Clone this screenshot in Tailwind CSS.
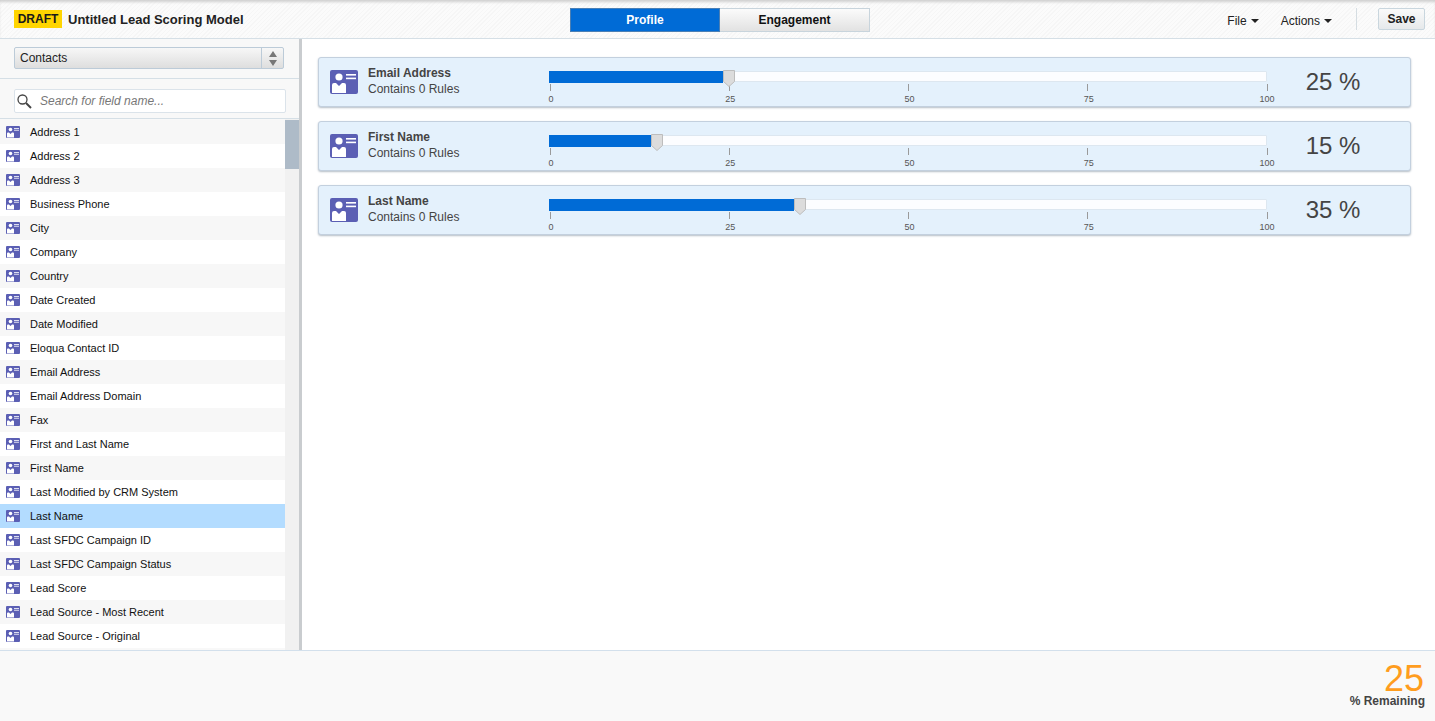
<!DOCTYPE html>
<html lang="en">

<head>
    <meta charset="UTF-8">
    <script src="https://cdn.jsdelivr.net/npm/@tailwindcss/browser@4"></script>
    <title>Lead Scoring Model</title>
</head>

<body class="h-[721px] overflow-hidden bg-white font-['Liberation_Sans',Arial,sans-serif] text-[12px]">

    <svg class="hidden">
        <symbol id="contact" viewBox="0 0 28 24">
            <rect width="28" height="24" rx="2" fill="#5b5fb4" />
            <circle cx="9" cy="7" r="3.6" fill="#fff" />
            <path d="M2 15q0-2 2-2h2l3 3 3-3h2q2 0 2 2v8H2z" fill="#fff" />
            <rect x="16" y="4" width="10" height="1.6" fill="#fff" />
            <rect x="16" y="7.6" width="10" height="1.6" fill="#fff" />
        </symbol>
    </svg>

    <div class="flex h-[721px] flex-col">

        <!-- top bar -->
        <header class="relative flex h-[39px] shrink-0 items-center border-b border-[#d5dfe6] bg-[repeating-linear-gradient(135deg,#f6f6f6_0,#f6f6f6_1px,#fbfbfb_1px,#fbfbfb_3px)] pl-[14px] pr-[10px] shadow-[inset_0_3px_3px_-1px_#cfcfcf]">
            <span class="flex h-[18px] w-[48px] items-center justify-center bg-[#ffd500] text-[12px] font-bold text-[#1a1a1a]">DRAFT</span>
            <span class="ml-[6px] mt-[2px] text-[13px] font-bold text-[#222]">Untitled Lead Scoring Model</span>

            <div class="absolute left-[570px] top-[8px] flex h-[24px] w-[300px] text-[12px] font-bold">
                <div class="flex w-[150px] items-center justify-center border border-[#4a7fb5] bg-[#006bd6] text-white">Profile</div>
                <div class="flex w-[150px] items-center justify-center border border-l-0 border-[#c8d4dc] bg-linear-to-b from-[#fbfbfb] to-[#e2e2e2] text-[#111]">Engagement</div>
            </div>

            <div class="ml-auto flex items-center text-[12px] text-[#222]">
                <span class="mt-[3px] flex items-center gap-[4px]">File
                    <svg width="8" height="4" viewBox="0 0 8 4"><path d="M0 0h8L4 4z" fill="#222" /></svg>
                </span>
                <span class="ml-[22px] mt-[3px] flex items-center gap-[4px]">Actions
                    <svg width="8" height="4" viewBox="0 0 8 4"><path d="M0 0h8L4 4z" fill="#222" /></svg>
                </span>
                <span class="ml-[24px] h-[22px] w-px bg-[#d5dde2]"></span>
                <button class="ml-[21px] h-[22px] w-[47px] rounded-[2px] border border-[#c9d6de] bg-linear-to-b from-[#fafafa] to-[#e6e9eb] text-[12px] font-bold text-[#222]">Save</button>
            </div>
        </header>

        <div class="flex min-h-0 flex-1">

            <!-- field list -->
            <aside class="flex w-[302px] shrink-0 flex-col border-r-[3px] border-[#c9cccf] bg-[#f8f8f8]">
                <div class="h-[40px] shrink-0 border-b border-[#d5dfe6] px-[14px] pt-[8px]">
                    <div class="flex h-[22px] w-[270px] items-center rounded-[2px] border border-[#bccbd8] bg-linear-to-b from-[#f7f7f7] to-[#dedede] text-[12px] text-[#222]">
                        <span class="flex-1 pl-[5px]">Contacts</span>
                        <span class="flex h-full w-[22px] items-center justify-center border-l border-[#bccbd8]">
                            <svg width="8" height="15" viewBox="0 0 8 15"><path d="M4 0l4 6H0zM0 9h8l-4 6z" fill="#777" /></svg>
                        </span>
                    </div>
                </div>
                <div class="h-[40px] shrink-0 border-b border-[#d5dfe6] pl-[14px] pt-[10px]">
                    <div class="flex h-[24px] w-[272px] items-center gap-[8px] rounded-[2px] border border-[#dbe3ea] bg-white pl-[1px]">
                        <svg width="16" height="16" viewBox="0 0 16 16" fill="none" stroke="#444"><circle cx="6.500" cy="6.500" r="4.500" stroke-width="1.300" /><path d="M10 10l5 5" stroke-width="2" /></svg>
                        <span class="text-[12px] italic text-[#777]">Search for field name...</span>
                    </div>
                </div>
                <div class="flex min-h-0 flex-1 overflow-hidden">
                    <ul id="fields" class="w-[285px] shrink-0 pt-px text-[11px] text-[#111]"></ul>
                    <div class="flex-1 bg-[#f1f1f1] pt-px">
                        <div class="h-[49px] bg-[#aebbc8]"></div>
                    </div>
                </div>
            </aside>

            <!-- score cards -->
            <main id="cards" class="flex flex-1 flex-col gap-[14px] pl-[16px] pr-[24px] pt-[18px]"></main>
        </div>

        <footer class="flex h-[71px] shrink-0 flex-col items-end border-t border-[#d3e0ec] bg-[#f9f9f9] pr-[10px] pt-[13px]">
            <span class="mr-px text-[36px] leading-[30px] text-[#ff9d1e]">25</span>
            <span class="mt-px text-[12px] font-bold leading-[13px] text-[#444]">% Remaining</span>
        </footer>
    </div>

    <script>
        const fieldNames = ['Address 1', 'Address 2', 'Address 3', 'Business Phone', 'City', 'Company', 'Country', 'Date Created', 'Date Modified', 'Eloqua Contact ID', 'Email Address', 'Email Address Domain', 'Fax', 'First and Last Name', 'First Name', 'Last Modified by CRM System', 'Last Name', 'Last SFDC Campaign ID', 'Last SFDC Campaign Status', 'Lead Score', 'Lead Source - Most Recent', 'Lead Source - Original'];

        const fields = document.getElementById('fields');
        fieldNames.forEach((name, i) => {
            let row = document.createElement('li');
            let bg = i % 2 == 0 ? 'bg-[#f7f7f7]' : 'bg-white';
            if (name == 'Last Name') bg = 'bg-[#b3dcff]';
            row.className = 'flex h-[24px] items-center gap-[10px] pl-[6px] ' + bg;
            row.innerHTML = '<svg class="h-[12px] w-[14px]"><use href="#contact" /></svg><span></span>';
            row.lastChild.textContent = name;
            fields.appendChild(row);
        });

        const scores = [['Email Address', 25], ['First Name', 15], ['Last Name', 35]];
        const cards = document.getElementById('cards');
        scores.forEach(([name, value]) => {
            let card = document.createElement('div');
            card.className = 'flex h-[50px] items-center rounded-[3px] border border-[#c3d0de] bg-[#e4f1fc] pl-[11px] shadow-[0_1px_2px_#b5bec6]';

            let ticks = [0, 25, 50, 75, 100].map((t) =>
                '<span class="flex w-0 flex-col items-center"><span class="h-[7px] w-px shrink-0 bg-[#9a9a9a]"></span><span class="mt-[3px] text-[9px] leading-[10px] text-[#555] ' + (t < 100 ? 'ml-[2px]' : '') + '">' + t + '</span></span>'
            ).join('');

            card.innerHTML =
                '<svg class="h-[24px] w-[28px] shrink-0"><use href="#contact" /></svg>' +
                '<div class="ml-[10px] mb-[2px] w-[181px] shrink-0 text-[#444]"><div class="text-[12px] font-bold leading-[16px]">' + name + '</div><div class="text-[12px] leading-[16px]">Contains 0 Rules</div></div>' +
                '<div class="relative mb-[2px] w-[718px] shrink-0 pt-[12px]">' +
                '<div class="h-[11px] rounded-[1px] border border-[#dde7f0] bg-[#fcfdff]"></div>' +
                '<div class="absolute left-0 top-[12px] h-[12px] bg-[#006bd6]" style="width:' + (value * 7.18 - 6) + 'px"></div>' +
                '<svg class="absolute top-[11px]" style="left:' + (value * 7.18 - 6) + 'px" width="12" height="17" viewBox="0 0 12 17"><path d="M.5.5h11v11L6 16.500.5 11.500z" fill="#dcdcdc" stroke="#bdbdbd" /></svg>' +
                '<div class="mt-[2px] flex justify-between pl-px">' + ticks + '</div>' +
                '</div>' +
                '<div class="flex-1 pl-[15px] text-center text-[24px] text-[#444]"><span class="mr-[26px]">' + value + ' %</span></div>';
            cards.appendChild(card);
        });
    </script>
</body>

</html>
